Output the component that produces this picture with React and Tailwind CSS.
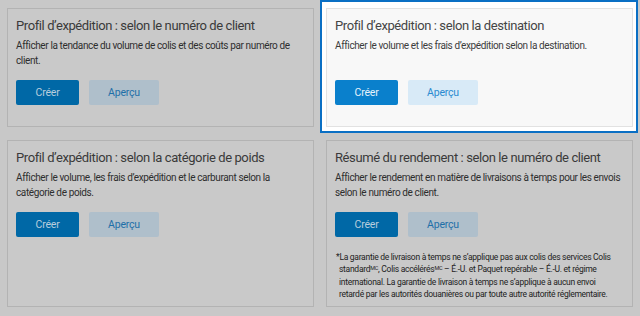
export default function App() {
  const font = { fontFamily: 'Roboto, "Liberation Sans", sans-serif' };
  const Card = ({ title, body, dim = true, children }) => (
    <div
      className={`border flex flex-col px-[8px] pt-[7px] pb-[21px] h-full ${
        dim ? "bg-[#c9c9c9] border-[#b3b3b3]" : "bg-[#f8f8f8] border-[#e2e2e2]"
      }`}
    >
      <div className={`text-[13px] tracking-[-0.4px] leading-[20px] ${dim ? "text-[#3a3a3a]" : "text-[#454545]"}`}>{title}</div>
      <div className={`mt-[2px] min-h-[30px] text-[10px] tracking-[-0.38px] leading-[15px] ${dim ? "text-[#2e2e2e]" : "text-[#3c3c3c]"}`}>{body}</div>
      <div className="mt-[12px] flex gap-[10px]">
        <div
          className={`w-[63px] h-[25px] rounded-[2px] flex items-center justify-center text-[10.5px] tracking-[-0.2px] ${
            dim ? "bg-[#0068a6] text-[#b8cddd]" : "bg-[#0a80cc] text-[#e6f2fb]"
          }`}
        >
          Créer
        </div>
        <div
          className={`w-[70px] h-[25px] rounded-[2px] flex items-center justify-center text-[10.5px] tracking-[-0.2px] ${
            dim ? "bg-[#afbfcb] text-[#1f6fa8]" : "bg-[#d8eaf7] text-[#2a8ad0]"
          }`}
        >
          Aperçu
        </div>
      </div>
      {children}
    </div>
  );
  return (
    <div className="w-[640px] h-[316px] bg-[#c8c8c8] overflow-hidden" style={font}>
      <div className="grid grid-cols-[307px_307px] gap-x-[12px] gap-y-[13px] pl-[7px] pt-[8px]">
        <Card
          title="Profil d’expédition : selon le numéro de client"
          body="Afficher la tendance du volume de colis et des coûts par numéro de client."
        />
        <div className="-ml-[6px] -mr-[5px] -mt-[8px] -mb-[6px] border-2 border-[#0a6fc4] bg-white pl-[4px] pr-[3px] pt-[6px] pb-[4px]">
          <Card
            dim={false}
            title="Profil d’expédition : selon la destination"
            body="Afficher le volume et les frais d’expédition selon la destination."
          />
        </div>
        <Card
          title="Profil d’expédition : selon la catégorie de poids"
          body="Afficher le volume, les frais d’expédition et le carburant selon la catégorie de poids."
        />
        <div className="[&>div]:pb-[6px] h-full">
          <Card
            title="Résumé du rendement : selon le numéro de client"
            body="Afficher le rendement en matière de livraisons à temps pour les envois selon le numéro de client."
          >
            <div className="mt-[14px] pl-[4px] pr-[6px] -indent-[3px] text-[8.5px] tracking-[-0.28px] leading-[12.3px] text-[#222]">
              *La garantie de livraison à temps ne s’applique pas aux colis des services Colis standard
              <sup className="text-[5.5px]">MC</sup>, Colis accélérés<sup className="text-[5.5px]">MC</sup> – É.-U. et Paquet repérable – É.-U. et régime international. La garantie de livraison à temps ne s’applique à aucun envoi retardé par les autorités douanières ou par toute autre autorité réglementaire.
            </div>
          </Card>
        </div>
      </div>
    </div>
  );
}
